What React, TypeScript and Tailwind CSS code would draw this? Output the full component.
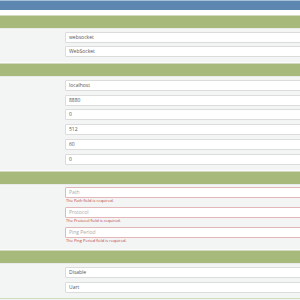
import React from "react";

type Field = { value?: string; placeholder?: string; error?: string };

const sections: Field[][] = [
  [{ value: "websocket" }, { value: "WebSocket" }],
  [
    { value: "localhost" },
    { value: "8880" },
    { value: "0" },
    { value: "512" },
    { value: "60" },
    { value: "0" },
  ],
  [
    { placeholder: "Path", error: "The Path field is required." },
    { placeholder: "Protocol", error: "The Protocol field is required." },
    { placeholder: "Ping Period", error: "The Ping Period field is required." },
  ],
  [{ value: "Disable" }, { value: "Uart" }],
];

function Header() {
  return <div className="h-[13px] shrink-0 border-t border-[#d2dbc2] bg-[#a7ba7b]" />;
}

function Input({ f }: { f: Field }) {
  const bad = !!f.error;
  return (
    <div className="flex flex-col">
      <div
        className={
          "flex h-[11px] w-[250px] items-center rounded-[1px] border bg-white pl-[3px] text-[5px] leading-none " +
          (bad ? "border-[#e3b7b7] text-[#aaaaaa]" : "border-[#dcdcdc] text-[#555555]")
        }
      >
        {f.value ?? f.placeholder}
      </div>
      {bad && (
        <div className="h-[6px] pl-[1px] pt-[1px] text-[4px] leading-none text-[#c0393a]">
          {f.error}
        </div>
      )}
    </div>
  );
}

function Section({ fields, last }: { fields: Field[]; last?: boolean }) {
  const hasErr = fields.some((f) => f.error);
  return (
    <>
      <Header />
      <div
        className={
          "flex shrink-0 flex-col border-t border-[#e8ebeb] bg-[#f3f5f5] pb-[5px] pl-[65px] pt-[2.5px] " +
          (hasErr ? "gap-[3px]" : "gap-[3.8px]") +
          (last ? " border-b border-b-[#cfdcbd]" : " border-b border-b-[#fbfbfb]")
        }
      >
        {fields.map((f, i) => (
          <Input key={i} f={f} />
        ))}
      </div>
    </>
  );
}

export default function App() {
  return (
    <div
      className="flex h-[300px] w-[300px] flex-col overflow-hidden bg-[#f3f5f5]"
      style={{ fontFamily: '"Open Sans", "Noto Sans", sans-serif' }}
    >
      <div className="h-[10px] shrink-0 border-t border-[#a9c1d8] bg-[#5d87b0]" />
      <div className="h-[5px] shrink-0 bg-white" />
      {sections.map((s, i) => (
        <Section key={i} fields={s} last={i === sections.length - 1} />
      ))}
    </div>
  );
}
